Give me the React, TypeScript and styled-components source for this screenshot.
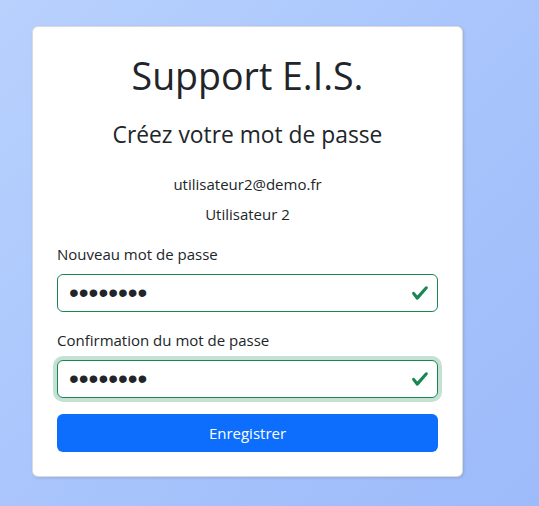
import React from "react";
import styled, { createGlobalStyle } from "styled-components";

const Global = createGlobalStyle`
  html, body { margin: 0; padding: 0; }
  body {
    font-family: "Open Sans", "Noto Sans", sans-serif;
    color: #212529;
    min-height: 506px;
    background: linear-gradient(135deg, #b8d1fd 0%, #a9c5fc 50%, #9dbafa 100%);
  }
`;

const Page = styled.div`
  min-height: 506px;
  box-sizing: border-box;
  padding: 26px 0 0 32px;
`;

const Card = styled.form`
  width: 431px;
  box-sizing: border-box;
  background: #fff;
  border: 1px solid rgba(0, 0, 0, 0.14);
  border-radius: 6px;
  box-shadow: 1px 1px 3px rgba(0, 0, 0, 0.12);
  padding: 24px;
  display: flex;
  flex-direction: column;
`;

const Title = styled.h1`
  margin: 0;
  font-weight: 400;
  font-size: 37.5px;
  line-height: 50px;
  text-align: center;
`;

const Subtitle = styled.h4`
  margin: 20px 0 0;
  font-weight: 400;
  font-size: 22.8px;
  line-height: 28px;
  text-align: center;
`;

const Info = styled.p<{ $gap: number }>`
  margin: ${(p) => p.$gap}px 0 0;
  font-size: 15px;
  line-height: 22px;
  text-align: center;
`;

const Field = styled.div<{ $gap: number }>`
  margin-top: ${(p) => p.$gap}px;
  display: flex;
  flex-direction: column;
`;

const Label = styled.label`
  font-size: 15px;
  line-height: 24px;
  margin-bottom: 8px;
`;

const InputWrap = styled.div`
  position: relative;
`;

const Input = styled.input<{ $focus?: boolean }>`
  width: 100%;
  box-sizing: border-box;
  height: 38px;
  border: 1px solid #198754;
  border-radius: 6px;
  padding: 0 36px 0 11px;
  font-family: "Liberation Sans", sans-serif;
  font-size: 28px;
  letter-spacing: 0px;
  color: #212529;
  outline: none;
  box-shadow: ${(p) => (p.$focus ? "0 0 0 4px rgba(25, 135, 84, 0.25)" : "none")};
`;

const Check = styled.svg`
  position: absolute;
  right: 9px;
  top: 10px;
  width: 18px;
  height: 18px;
`;

const Button = styled.button`
  margin-top: 16px;
  height: 38px;
  border: none;
  border-radius: 6px;
  background: #0d6efd;
  color: #fff;
  font-family: "Open Sans", sans-serif;
  font-size: 15px;
`;

const CheckIcon = () => (
  <Check viewBox="0 0 8 8">
    <path
      fill="#198754"
      d="M2.3 6.73.6 4.53c-.4-1.04.46-1.4 1.1-.8l1.1 1.4 3.4-3.8c.6-.63 1.6-.27 1.2.7l-4 4.6c-.43.5-.8.4-1.1.1z"
    />
  </Check>
);

export default function App() {
  return (
    <>
      <Global />
      <Page>
        <Card onSubmit={(e) => e.preventDefault()}>
          <Title>Support E.I.S.</Title>
          <Subtitle>Créez votre mot de passe</Subtitle>
          <Info $gap={24}>utilisateur2@demo.fr</Info>
          <Info $gap={8}>Utilisateur 2</Info>
          <Field $gap={17}>
            <Label>Nouveau mot de passe</Label>
            <InputWrap>
              <Input type="password" defaultValue="12345678" />
              <CheckIcon />
            </InputWrap>
          </Field>
          <Field $gap={16}>
            <Label>Confirmation du mot de passe</Label>
            <InputWrap>
              <Input type="password" defaultValue="12345678" $focus />
              <CheckIcon />
            </InputWrap>
          </Field>
          <Button type="submit">Enregistrer</Button>
        </Card>
      </Page>
    </>
  );
}
